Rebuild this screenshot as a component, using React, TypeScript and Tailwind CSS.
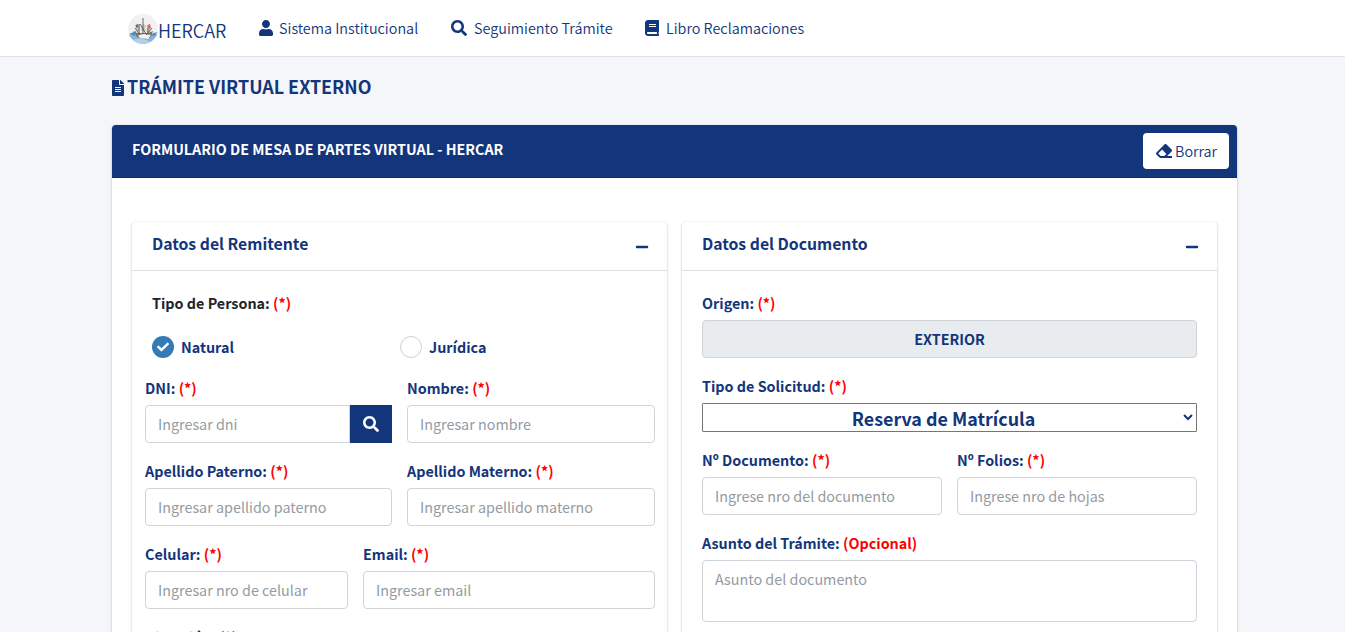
import type { ReactNode } from "react";
import { FaBook, FaCheck, FaEraser, FaFileAlt, FaMinus, FaSearch, FaUser } from "react-icons/fa";

function Logo() {
  return (
    <svg viewBox="0 0 30 30" className="block h-[30px] w-[30px]">
      <defs>
        <clipPath id="disc">
          <circle cx="15" cy="15" r="15" />
        </clipPath>
      </defs>
      <g clipPath="url(#disc)">
        <rect width="30" height="30" fill="#f1f1f1" />
        <path d="M0 21 L5 20 L10 22 L22 21 L30 18 V30 H0Z" fill="#85b4dc" />
        <path d="M4 26 Q12 23 18 26 T28 25 V30 H4Z" fill="#b4cfe6" />
        <path d="M1 20 L8 17 L7 22Z M22 21 L28 18 L27 22Z" fill="#4d8fc0" />
        <path d="M5 17 L9 19 L20 19 L25 17 L23 23 L18 25 L9 23Z" fill="#77746c" />
        <path d="M10 21 L16 20 L23 21 L20 25 L12 24Z" fill="#f6f4ee" />
        <path d="M8 12 L12 10 L12 17 L8 17Z M14 10 L18 11 L17 18 L13 17Z M19 14 L23 12 L22 18 L18 18Z" fill="#cfcdc6" />
        <path d="M15 4 V20 M11 10 V19 M20 11 V19 M7 14 L12 21 M24 14 L18 21 M12 10 L18 20" stroke="#484848" strokeWidth="0.8" fill="none" />
        <path d="M19.500 11 L22 10 L23 14 L21 15Z" fill="#e8694c" />
        <path d="M7.500 11 L10 10 L10 13 L8 14Z" fill="#3c79a8" />
      </g>
    </svg>
  );
}

function NavItem({ icon, children, className }: { icon: ReactNode; children: string; className: string }) {
  return (
    <a className={`flex items-center text-[14.4px] font-[350] leading-6 whitespace-nowrap ${className}`}>
      {icon}
      {children}
    </a>
  );
}

function Field({ label, note = "(*)", children, className = "" }: { label: string; note?: string; children: ReactNode; className?: string }) {
  return (
    <div className={`mb-4 min-w-0 ${className}`}>
      <label className="mb-[5px] block h-6 text-[14.35px] font-bold leading-6 whitespace-nowrap">
        {label}: <span className="text-[#ff0000]">{note}</span>
      </label>
      {children}
    </div>
  );
}

function TextInput({ placeholder, className = "rounded" }: { placeholder: string; className?: string }) {
  return (
    <input
      placeholder={placeholder}
      className={`block h-[38px] w-full min-w-0 border border-[#ced4da] bg-white px-3 pb-[2px] text-[14.35px] leading-6 placeholder:text-[#939ba2] ${className}`}
    />
  );
}

function Panel({ title, children }: { title: string; children: ReactNode }) {
  return (
    <section className="w-[535px] rounded bg-white shadow-[0_0_1px_rgba(0,0,0,0.13),0_1px_3px_rgba(0,0,0,0.2)]">
      <header className="flex h-[49px] justify-between border-b border-[#dfdfdf] pl-5 pr-[18px]">
        <h3 className="pt-[10px] text-[15.75px] font-bold leading-6">{title}</h3>
        <FaMinus className="mt-[18px] h-[14px] w-[14px]" />
      </header>
      {children}
    </section>
  );
}

export default function App() {
  return (
    <div className="h-[632px] overflow-hidden bg-[#f4f6f9] font-['Noto_Sans_CJK_SC',sans-serif] text-[#13357b]">
      <nav className="flex h-[57px] border-b border-[#dee2e6] bg-white pl-[128px]">
        <div className="flex h-[56px] w-[131px] items-center pt-[2px]">
          <Logo />
          <span className="pt-[2px] text-[18px] font-[350] leading-[30px]">HERCAR</span>
        </div>
        <NavItem className="w-[192px]" icon={<FaUser className="mr-[6px] h-4 w-[14px]" />}>Sistema Institucional</NavItem>
        <NavItem className="w-[194px]" icon={<FaSearch className="mr-[7px] h-4 w-4" />}>Seguimiento Trámite</NavItem>
        <NavItem className="" icon={<FaBook className="mr-[7px] h-4 w-[14px]" />}>Libro Reclamaciones</NavItem>
      </nav>
      <main className="ml-[112px] w-[1125px]">
        <h1 className="flex h-[68px] items-start gap-[3px] pt-[15px] text-[17.9px] font-bold leading-[29px]">
          <FaFileAlt className="mt-2 h-4 w-3" />
          TRÁMITE VIRTUAL EXTERNO
        </h1>
        <div className="h-[560px] rounded bg-white shadow-[0_0_1px_rgba(0,0,0,0.13),0_1px_3px_rgba(0,0,0,0.2)]">
          <header className="flex h-[53px] items-start justify-between rounded-t border-b border-[#102d68] bg-[#13357b] pl-5 pr-2 pt-2">
            <h2 className="pt-1 text-[14.3px] font-bold leading-6 text-white">FORMULARIO DE MESA DE PARTES VIRTUAL - HERCAR</h2>
            <button className="flex h-9 w-[86px] items-center gap-[3px] whitespace-nowrap rounded bg-white pl-[13px] text-[14.4px] font-[350]">
              <FaEraser className="h-4 w-4 shrink-0" />
              Borrar
            </button>
          </header>
          <div className="flex gap-[15px] pl-5 pt-11">
            <Panel title="Datos del Remitente">
              <div className="px-[13px] pt-5">
                <p className="h-6 pl-[7px] text-[14.35px] font-bold leading-6 text-[#212529]">
                  Tipo de Persona: <span className="text-[#ff0000]">(*)</span>
                </p>
                <div className="mb-[18px] mt-[21px] flex h-[22px] pl-[7px] text-[14.35px] font-bold leading-[22px]">
                  <label className="flex w-[248px] items-center gap-[7px]">
                    <span className="flex h-[22px] w-[22px] items-center justify-center rounded-full bg-[#337ab7]">
                      <FaCheck className="h-3 w-3 text-white" />
                    </span>
                    Natural
                  </label>
                  <label className="flex items-center gap-[7px]">
                    <span className="h-[22px] w-[22px] rounded-full border border-[#d3cfc8]" />
                    Jurídica
                  </label>
                </div>
                <div className="grid grid-cols-[247px_248px] gap-x-[15px]">
                  <Field label="DNI">
                    <div className="flex">
                      <TextInput placeholder="Ingresar dni" className="rounded-l" />
                      <button className="flex h-[38px] w-[42px] shrink-0 items-center justify-center bg-[#13357b] text-white">
                        <FaSearch className="h-4 w-4" />
                      </button>
                    </div>
                  </Field>
                  <Field label="Nombre">
                    <TextInput placeholder="Ingresar nombre" />
                  </Field>
                  <Field label="Apellido Paterno">
                    <TextInput placeholder="Ingresar apellido paterno" />
                  </Field>
                  <Field label="Apellido Materno">
                    <TextInput placeholder="Ingresar apellido materno" />
                  </Field>
                </div>
                <div className="grid grid-cols-[203px_292px] gap-x-[15px]">
                  <Field label="Celular">
                    <TextInput placeholder="Ingresar nro de celular" />
                  </Field>
                  <Field label="Email">
                    <TextInput placeholder="Ingresar email" />
                  </Field>
                </div>
                <Field label="Dirección">
                  <TextInput placeholder="Ingresar dirección" />
                </Field>
              </div>
            </Panel>
            <Panel title="Datos del Documento">
              <div className="px-5 pt-5">
                <Field label="Origen">
                  <input
                    readOnly
                    value="EXTERIOR"
                    className="block h-[38px] w-full rounded border border-[#ced4da] bg-[#e9ecef] px-3 pb-[2px] text-center text-[14.35px] font-bold"
                  />
                </Field>
                <Field label="Tipo de Solicitud">
                  <select className="block h-[29px] w-full rounded-[1px] border border-[#767676] bg-white pb-[2px] text-center text-[17.9px] font-bold">
                    <option>Reserva de Matrícula</option>
                  </select>
                </Field>
                <div className="grid grid-cols-2 gap-x-[15px]">
                  <Field label="Nº Documento">
                    <TextInput placeholder="Ingrese nro del documento" />
                  </Field>
                  <Field label="Nº Folios">
                    <TextInput placeholder="Ingrese nro de hojas" />
                  </Field>
                </div>
                <Field label="Asunto del Trámite" note="(Opcional)">
                  <textarea
                    placeholder="Asunto del documento"
                    className="block h-[62px] w-full resize-none rounded border border-[#ced4da] px-3 py-[6px] text-[14.35px] leading-6 placeholder:text-[#939ba2]"
                  />
                </Field>
              </div>
            </Panel>
          </div>
        </div>
      </main>
    </div>
  );
}
